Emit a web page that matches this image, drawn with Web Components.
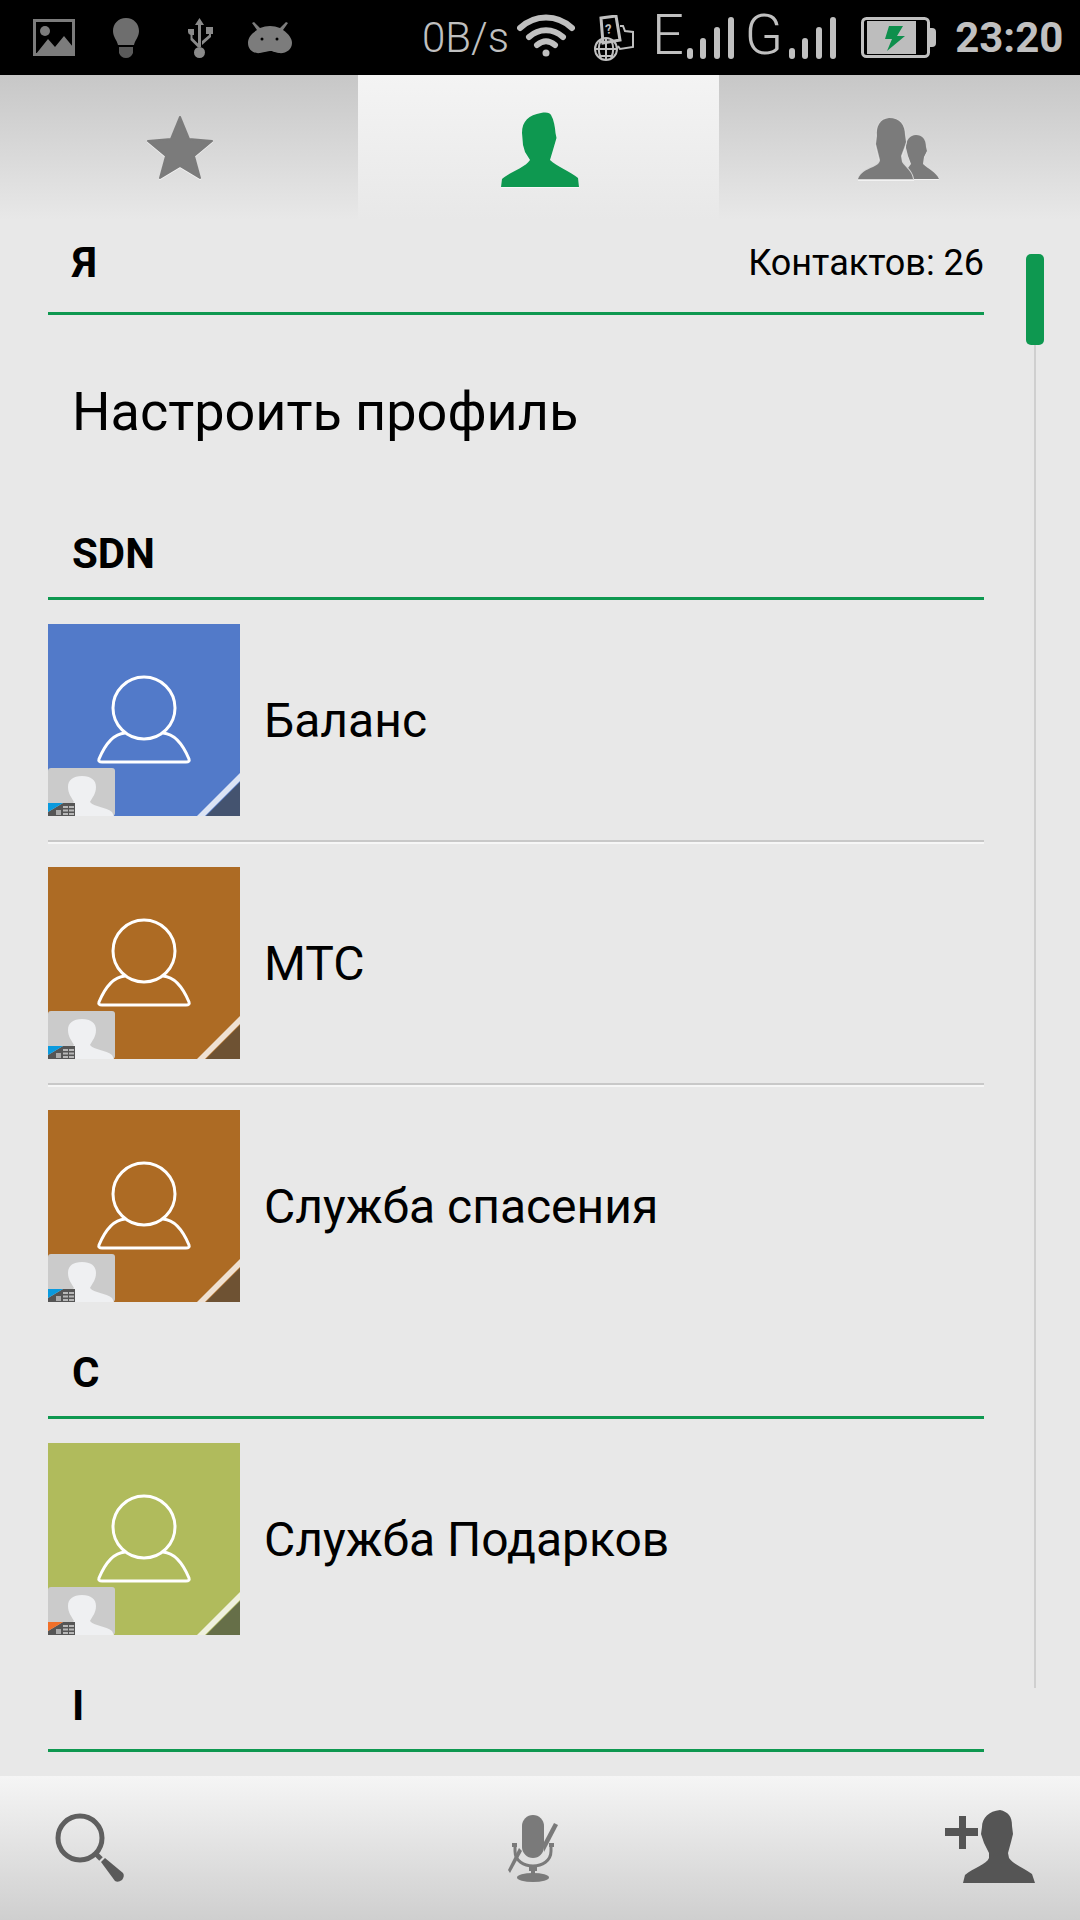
<!DOCTYPE html>
<html>
<head>
<meta charset="utf-8">
<style>
    html, body { margin:0; padding:0; background:#e8e8e8; }
    body { width:1080px; height:1920px; overflow:hidden; font-family:Roboto, "Liberation Sans", sans-serif; }
</style>
</head>
<body>
<contacts-app>
    <status-bar slot="status"></status-bar>
    <tab-bar slot="tabs"></tab-bar>
    <section-header first>Я<span slot="extra">Контактов: 26</span></section-header>
    <profile-row>Настроить профиль</profile-row>
    <section-header>SDN</section-header>
    <contact-row color="#527ac9" corner="#44536f" tag="#0a9ade">Баланс</contact-row>
    <contact-row color="#ad6b24" corner="#6e5233" tag="#0a9ade" divider>МТС</contact-row>
    <contact-row color="#ad6b24" corner="#6e5233" tag="#0a9ade" divider>Служба спасения</contact-row>
    <section-header>С</section-header>
    <contact-row color="#b0bb5c" corner="#666f48" tag="#f0702a">Служба Подарков</contact-row>
    <section-header>I</section-header>
    <bottom-bar slot="bottom"></bottom-bar>
</contacts-app>

<script>
// ===== APP SHELL =====
customElements.define('contacts-app', class extends HTMLElement {
    connectedCallback() {
        this.attachShadow({ mode: 'open' });
        this.shadowRoot.innerHTML = `
            <style>
                :host { display:flex; flex-direction:column; width:1080px; height:1920px; background:#e8e8e8; }
                .list { flex:1; position:relative; overflow:hidden; padding:0 96px 0 48px; }
                .track { position:absolute; left:1034px; top:125px; height:1343px; width:2px; background:#cfcfcf; }
                .thumb { position:absolute; left:1026px; top:34px; width:18px; height:91px; border-radius:5px; background:#0e9850; }
            </style>
            <slot name="status"></slot>
            <slot name="tabs"></slot>
            <div class="list">
                <slot></slot>
                <div class="track"></div>
                <div class="thumb"></div>
            </div>
            <slot name="bottom"></slot>
        `;
    }
});

// ===== STATUS BAR =====
customElements.define('status-bar', class extends HTMLElement {
    connectedCallback() {
        this.attachShadow({ mode: 'open' });
        const bars = `<svg style="margin-left:MLpx" width="48" height="42" viewBox="0 0 48 42" fill="#c0c0c0">
            <rect x="0" y="31" width="6" height="11" rx="3"/><rect x="13" y="21" width="6" height="21" rx="3"/>
            <rect x="27" y="10" width="6" height="32" rx="3"/><rect x="41" y="0" width="6" height="42" rx="3"/></svg>`;
        this.shadowRoot.innerHTML = `
            <style>
                :host { display:flex; align-items:center; height:75px; background:#000; color:#c0c0c0; padding-left:33px; box-sizing:border-box; overflow:hidden; }
                svg { display:block; flex:none; }
                .speed { font-size:42px; font-weight:300; margin-left:130px; width:95px; }
                .net { font-size:56px; font-weight:300; line-height:56px; margin-top:-6px; }
                .time { font-size:42px; font-weight:700; margin-left:18px; }
            </style>
            <svg width="42" height="37" viewBox="0 0 42 37">
                <rect x="1.5" y="1.5" width="39" height="34" fill="none" stroke="#7c7c7c" stroke-width="3"/>
                <circle cx="12" cy="12" r="5" fill="#7c7c7c"/>
                <path d="M3 35 15 20 22 28 31 17 40 28V36H3Z" fill="#7c7c7c"/>
            </svg>
            <svg style="margin-left:38px" width="26" height="40" viewBox="0 0 26 40" fill="#6e6e6e">
                <path d="M13 0C5 0 0 6 0 13c0 6 4 9 5 14h16c1-5 5-8 5-14C26 6 21 0 13 0Z"/>
                <path d="M6 29h14v6q-2 5-7 5t-7-5Z" fill="#5a5a5a"/>
            </svg>
            <svg style="margin-left:47px" width="27" height="40" viewBox="0 0 27 40" fill="#8a8a8a">
                <path d="M13.5 0 18 7h-3v22h-3V7H9Z"/>
                <circle cx="13.5" cy="34.5" r="5.5"/>
                <path d="M2 11h6v6H6.500v3l6 6v4l-8-8v-5Q2 16 2 14Z"/>
                <path d="M20 9h7v7h-2v3l-9 8v-4l7-6v-1h-3Z"/>
            </svg>
            <svg style="margin-left:35px" width="44" height="32" viewBox="0 0 44 32" fill="#7c7c7c">
                <path d="M9 8 4 1l2-1 6 6Q17 4 22 4t10 2l6-6 2 1-5 7c6 4 9 9 9 13 0 7-7 11-13 10-5-1-7-2-9-2s-5 1-10 2C6 32 0 28 0 21c0-5 3-9 9-13Z"/>
                <circle cx="14" cy="17" r="1.500" fill="#000"/><circle cx="29" cy="17" r="1.500" fill="#000"/>
            </svg>
            <span class="speed">0B/s</span>
            <svg style="margin-top:-4px" width="58" height="43" viewBox="0 0 58 43" fill="none" stroke="#c0c0c0" stroke-width="6" stroke-linecap="round">
                <path d="M3 14C18 0 40 0 55 14"/><path d="M12 23c10-9 24-9 34 0"/><path d="M20 31c6-5 12-5 18 0"/>
                <circle cx="29" cy="39" r="3.500" fill="#c0c0c0" stroke="none"/>
            </svg>
            <svg style="margin-left:17px" width="42" height="46" viewBox="0 0 42 46" fill="none" stroke="#c0c0c0" stroke-width="2">
                <path d="M9 3l15-2 4 24-17 3Z" stroke-width="3"/>
                <path d="M28 11l3 0 2 5 8 1v15l-13 2-2-3"/>
                <circle cx="14" cy="34" r="11"/><path d="M3 34h22M14 23v22M7 27h14M7 41h14M9 25c-3 6-3 12 0 18M19 25c3 6 3 12 0 18"/>
                <text x="14" y="19" font-family="Roboto, sans-serif" font-size="13" font-weight="700" fill="#c0c0c0" stroke="none" transform="rotate(-8 14 19)">?</text>
            </svg>
            <span class="net" style="margin-left:18px">E</span>
            ${bars.replace('ML', '3')}
            <span class="net" style="margin-left:10px">G</span>
            ${bars.replace('ML', '6')}
            <svg style="margin-left:24px" width="76" height="41" viewBox="0 0 76 41">
                <rect x="1.500" y="1.500" width="66" height="38" rx="4" fill="none" stroke="#c0c0c0" stroke-width="3"/>
                <rect x="6" y="4" width="49" height="33" fill="#bdbdbd"/>
                <path d="M68 11h3q4 0 4 4v11q0 4-4 4h-3Z" fill="#c0c0c0"/>
                <path d="M28 9h14l-6 10h8L26 34l5-12h-7Z" fill="#0e8f4c"/>
            </svg>
            <span class="time">23:20</span>
        `;
    }
});

// ===== TABS =====
customElements.define('tab-bar', class extends HTMLElement {
    connectedCallback() {
        this.attachShadow({ mode: 'open' });
        this.shadowRoot.innerHTML = `
            <style>
                :host { display:grid; grid-template-columns:358px 361px 361px; height:145px; }
                .tab { display:flex; justify-content:center; background:linear-gradient(#c7c7c7,#e8e8e8); }
                .tab.on { background:linear-gradient(#f4f4f4,#e8e8e8); }
                svg { display:block; filter:drop-shadow(0 1px 0 rgba(255,255,255,.6)); }
            </style>
            <div class="tab">
                <svg style="margin:41px 0 0 2px" width="68" height="65" viewBox="0 0 68 65">
                    <path d="M34 1 43 23 66 25 48 40 54 62 34 50 14 62 20 40 2 25 25 23Z" fill="#7b7b7b" stroke="#7b7b7b" stroke-width="2" stroke-linejoin="round"/>
                </svg>
            </div>
            <div class="tab on">
                <svg style="margin:37px 0 0 3px" width="78" height="75" viewBox="0 0 78 75">
                    <path d="M40 1C46 0 49 1 50 3 53 8 54 15 54.500 21L55.500 26 52 38 49 48C55 54 70 60 77 66L78 75H0L1 67C8 60 24 56 29 48L24 40 22 33 21 21C21 9 28 3 40 1Z" fill="#0e9850"/>
                </svg>
            </div>
            <div class="tab">
                <svg style="margin:43px 0 0 -2px" width="82" height="62" viewBox="0 0 82 62" fill="#7b7b7b">
                    <path d="M58 17C64 17 68 21 68 29L69 33 66 39 65 46C70 51 78 54 81 61H50L50 50 53 46 50 38 48 30C48 22 52 17 58 17Z"/>
                    <path d="M31 0C42 0 47 7 47 17L48 24 46 30 43 38 44 44C48 50 54 53 55 61H0C3 54 8 52 15 49 19 47 22 45 22 42L20 34 18 26 19 18C18 8 22 1 31 0Z" stroke="#d6d6d6" stroke-width="2" paint-order="stroke"/>
                </svg>
            </div>
        `;
    }
});

// ===== SECTION HEADER =====
customElements.define('section-header', class extends HTMLElement {
    connectedCallback() {
        this.attachShadow({ mode: 'open' });
        this.shadowRoot.innerHTML = `
            <style>
                :host { display:flex; justify-content:space-between; align-items:center; box-sizing:border-box; height:117px; padding:41px 0 14px 24px; border-bottom:3px solid #0e9850; color:#000; }
                :host([first]) { height:95px; padding-top:7px; }
                .title { font-size:42px; font-weight:700; line-height:59px; }
                ::slotted([slot=extra]) { font-size:36px; font-weight:400; }
            </style>
            <span class="title"><slot></slot></span>
            <slot name="extra"></slot>
        `;
    }
});

// ===== PROFILE ROW =====
customElements.define('profile-row', class extends HTMLElement {
    connectedCallback() {
        this.attachShadow({ mode: 'open' });
        this.shadowRoot.innerHTML = `
            <style>
                :host { display:block; height:168px; box-sizing:border-box; padding:62px 0 0 24px; font-size:54px; line-height:70px; color:#000; }
            </style>
            <slot></slot>
        `;
    }
});

// ===== CONTACT ROW =====
customElements.define('contact-row', class extends HTMLElement {
    connectedCallback() {
        const color = this.getAttribute('color');
        const corner = this.getAttribute('corner');
        const tag = this.getAttribute('tag');
        this.attachShadow({ mode: 'open' });
        this.shadowRoot.innerHTML = `
            <style>
                :host { display:flex; align-items:center; gap:24px; padding-top:24px; font-size:48px; color:#000; }
                :host([divider]) { margin-top:24px; padding-top:25px; border-top:2px solid #c8c8c8; position:relative; }
                :host([divider])::before { content:''; position:absolute; left:0; right:0; top:0; height:2px; background:#f6f6f6; }
                svg { display:block; flex:none; }
            </style>
            <svg width="192" height="192" viewBox="0 0 192 192">
                <rect width="192" height="192" fill="${color}"/>
                <path d="M192 158V192H158Z" fill="${corner}"/>
                <path d="M192 149V157L157 192H149Z" fill="#fff" opacity=".8"/>
                <g fill="none" stroke="#fff" stroke-width="3">
                    <circle cx="96" cy="84" r="31"/>
                    <path d="M77 109C64 110 56 123 51 135Q50 138 54 138H138Q142 138 141 135C136 123 128 110 115 109"/>
                </g>
                <rect y="144" width="67" height="48" rx="3" fill="#cbcbcb"/>
                <path d="M34 152C43 152 48 156 48 163 48 170 44 174 42 178 46 183 58 183 64 188L66 192H2L4 188C10 183 22 183 26 178 24 174 20 170 20 163 20 156 25 152 34 152Z" fill="#eff0f2"/>
                <path d="M15 179H27V192H0V188Z" fill="#555"/>
                <path d="M0 179H15L0 188Z" fill="${tag}"/>
                <rect x="8" y="186" width="5" height="5" fill="#aaa"/>
                <g fill="#b8b8b8">
                    <rect x="15" y="182" width="5" height="2"/><rect x="21" y="182" width="5" height="2"/>
                    <rect x="15" y="185.500" width="5" height="2"/><rect x="21" y="185.500" width="5" height="2"/>
                    <rect x="15" y="189" width="5" height="2"/><rect x="21" y="189" width="5" height="2"/>
                </g>
            </svg>
            <slot></slot>
        `;
    }
});

// ===== BOTTOM BAR =====
customElements.define('bottom-bar', class extends HTMLElement {
    connectedCallback() {
        this.attachShadow({ mode: 'open' });
        this.shadowRoot.innerHTML = `
            <style>
                :host { display:flex; justify-content:space-between; align-items:flex-start; box-sizing:border-box; height:144px; padding:34px 45px 0 55px; background:linear-gradient(#f5f5f5,#cfcfcf); }
                svg { display:block; }
            </style>
            <svg style="margin-top:3px" width="70" height="70" viewBox="0 0 70 70">
                <circle cx="25" cy="25" r="22" fill="none" stroke="#5f5f5f" stroke-width="5"/>
                <path d="M41 41 46 46" stroke="#5f5f5f" stroke-width="5"/>
                <path d="M46 49 50 45 68 60Q70 63 67 67 63 70 60 68Z" fill="#5a5a5a"/>
            </svg>
            <svg style="margin:5px 0 0 -4px" width="50" height="67" viewBox="0 0 50 67" fill="#7a7a7a">
                <rect x="14" y="0" width="22" height="43" rx="11"/>
                <path d="M36 27 46 8 50 10 36 37Z"/>
                <path d="M7 29V36C7 46 16 51 25 51 34 51 43 46 43 36V29" fill="none" stroke="#7a7a7a" stroke-width="3"/>
                <rect x="4" y="28" width="5" height="4"/><rect x="41" y="28" width="5" height="4"/>
                <rect x="21" y="50" width="8" height="6"/><rect x="23" y="55" width="4" height="5"/>
                <ellipse cx="25" cy="62.500" rx="16" ry="4.500"/>
                <path d="M14 36 2 58 0 55 11 33Z"/>
            </svg>
            <svg width="90" height="75" viewBox="0 0 90 75" fill="#555">
                <rect x="0" y="18" width="33" height="8"/><rect x="14" y="6" width="7" height="33"/>
                <path d="M55 0C63 2 67 6 67 16L68 24 66 32 63 43 64 48C68 54 78 58 87 64L90 73H18L20 65C28 58 42 54 44 48L44 43 39 33 36 24 37 17C37 8 44 1 55 0Z"/>
            </svg>
        `;
    }
});
</script>
</body>
</html>
